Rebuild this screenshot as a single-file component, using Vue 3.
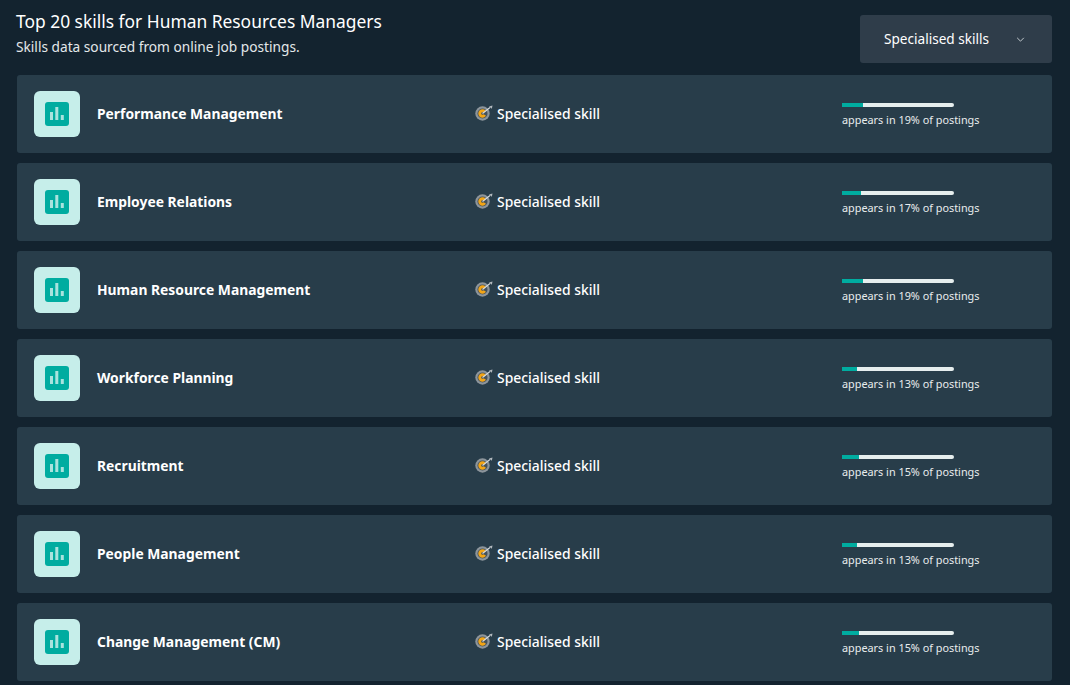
<template>
  <div class="page">
    <header class="head">
      <div class="titles">
        <h2>Top 20 skills for Human Resources Managers</h2>
        <p>Skills data sourced from online job postings.</p>
      </div>
      <button class="select">
        <span>Specialised skills</span>
        <svg class="chev" viewBox="0 0 10 6" fill="none" stroke="currentColor" stroke-width="1.1">
          <path d="M1 1l4 4 4-4" />
        </svg>
      </button>
    </header>

    <ul class="list">
      <li v-for="skill in skills" :key="skill.name" class="row">
        <div class="icon-box">
          <div class="icon-inner">
            <svg viewBox="0 0 24 24" class="bars" fill="#a9e3de">
              <rect x="5" y="10" width="3" height="8" />
              <rect x="10.3" y="5" width="3" height="13" />
              <rect x="15.8" y="13" width="3" height="5" />
            </svg>
          </div>
        </div>
        <div class="name">{{ skill.name }}</div>
        <div class="kind">
          <svg viewBox="0 0 18 16" class="target">
            <circle cx="7.5" cy="8.5" r="7.2" fill="#8d959b" />
            <circle cx="7.5" cy="8.5" r="5" fill="#45525c" />
            <path d="M11 6.2A4.2 4.2 0 1 0 11 10.8L7.5 8.5z" fill="#f2a516" />
            <circle cx="7.5" cy="8.5" r="1.3" fill="#45525c" />
            <path d="M7.5 8.5L15 2.5" stroke="#d9dee1" stroke-width="1.1" />
            <path d="M14 1.5l3.5-1-.7 3.2z" fill="#b4bbc0" />
          </svg>
          <span>Specialised skill</span>
        </div>
        <div class="usage">
          <div class="track">
            <div class="fill" :style="{ width: skill.pct + '%' }"></div>
          </div>
          <div class="usage-text">appears in {{ skill.pct }}% of postings</div>
        </div>
      </li>
    </ul>
  </div>
</template>

<script setup>
const skills = [
  { name: 'Performance Management', pct: 19 },
  { name: 'Employee Relations', pct: 17 },
  { name: 'Human Resource Management', pct: 19 },
  { name: 'Workforce Planning', pct: 13 },
  { name: 'Recruitment', pct: 15 },
  { name: 'People Management', pct: 13 },
  { name: 'Change Management (CM)', pct: 15 },
]
</script>

<style>
html,
body {
  background: #13232f;
  overflow: hidden;
}
</style>

<style scoped>
.page {
  height: 685px;
  overflow: hidden;
  box-sizing: border-box;
  padding: 15px 18px 0 17px;
  background: #13232f;
  color: #fff;
  font-family: "Noto Sans", "Open Sans", sans-serif;
}

.head {
  display: flex;
  justify-content: space-between;
  align-items: flex-start;
  height: 60px;
}

.titles {
  margin-left: -1px;
  margin-top: -6px;
}

h2 {
  margin: 0;
  font-size: 17.4px;
  line-height: 24px;
  font-weight: 400;
  color: #fff;
}

.titles p {
  margin: 4px 0 0;
  font-size: 13.7px;
  line-height: 20px;
  color: #e3e8ea;
}

.select {
  width: 192px;
  height: 48px;
  display: flex;
  align-items: center;
  justify-content: space-between;
  padding: 0 27px 2px 24px;
  background: #2f3d4a;
  border: none;
  border-radius: 3px;
  color: #fff;
  font: inherit;
  font-size: 13.6px;
}

.chev {
  width: 9px;
  height: 5px;
  margin-top: 2px;
  color: #cfd5d9;
}

.list {
  list-style: none;
  margin: 0;
  padding: 0;
  display: flex;
  flex-direction: column;
  gap: 10px;
}

.row {
  height: 78px;
  flex: none;
  display: grid;
  grid-template-columns: 46px 395px 367px 112px;
  align-items: center;
  padding-left: 17px;
  background: #283d4a;
  border-radius: 3px;
}

.icon-box {
  width: 46px;
  height: 46px;
  display: flex;
  align-items: center;
  justify-content: center;
  background: #c6eeea;
  border-radius: 6px;
}

.icon-inner {
  width: 24px;
  height: 24px;
  background: #00aca0;
  border-radius: 3px;
}

.bars {
  display: block;
  width: 24px;
  height: 24px;
}

.name {
  padding: 0 0 2px 17px;
  font-size: 13.85px;
  font-weight: 700;
  color: #fff;
}

.kind {
  display: flex;
  align-items: center;
  gap: 4px;
  padding-bottom: 2px;
  font-size: 13.9px;
  font-weight: 500;
  color: #fff;
}

.target {
  width: 18px;
  height: 16px;
}

.usage {
  padding-top: 2px;
}

.track {
  height: 4px;
  width: 112px;
  background: #e6eeee;
  border-radius: 0 2px 2px 0;
  overflow: hidden;
}

.fill {
  height: 100%;
  background: #00aca0;
}

.usage-text {
  margin-top: 5px;
  font-size: 10.85px;
  line-height: 15px;
  white-space: nowrap;
  color: #e9edee;
}
</style>
